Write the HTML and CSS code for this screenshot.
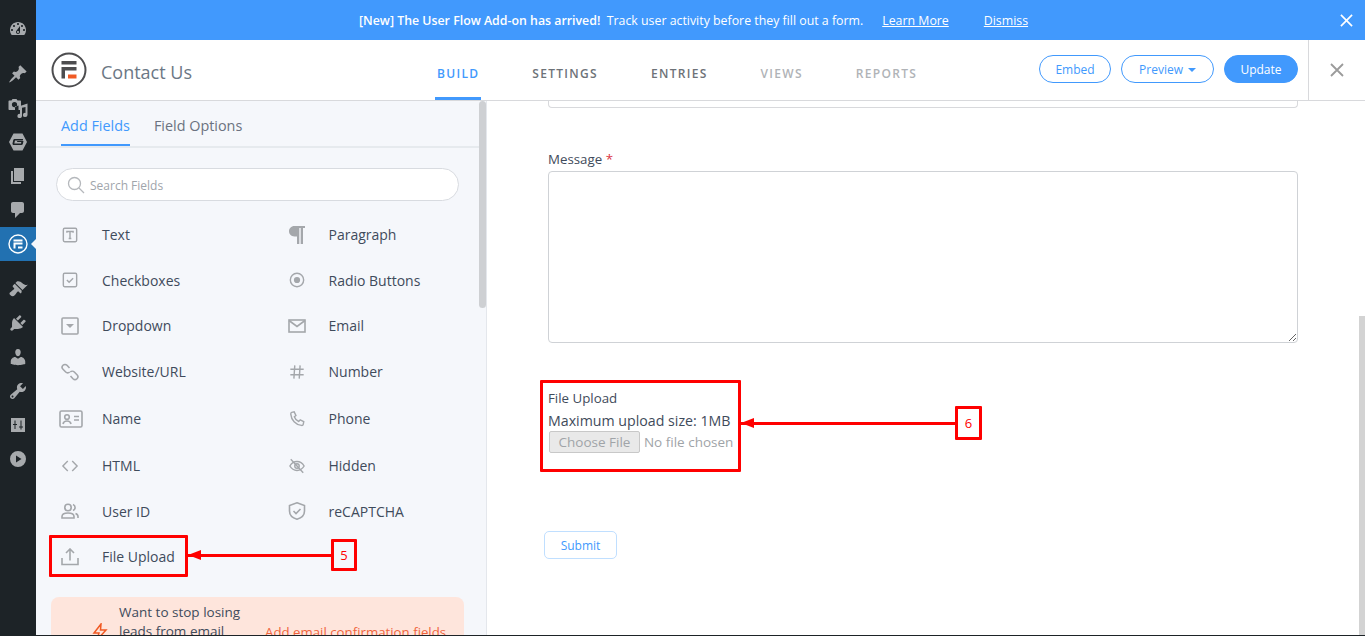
FILE: index.html
```html
<!DOCTYPE html>
<html lang="en">
<head>
    <meta charset="UTF-8">
    <meta name="viewport" content="width=device-width, initial-scale=1.0">
    <title>Contact Us</title>
    <link rel="stylesheet" href="styles.css">
</head>
<body>
    <div class="app">
        <nav class="adminbar">
            <a class="admin-item first"><svg viewBox="0 0 20 20"><path d="M3.760 16h12.480c1.100-1.370 1.760-3.110 1.760-5 0-4.420-3.580-8-8-8s-8 3.580-8 8c0 1.890.66 3.630 1.760 5zM10 4c.55 0 1 .45 1 1s-.45 1-1 1-1-.45-1-1 .45-1 1-1zM6 6c.55 0 1 .45 1 1s-.45 1-1 1-1-.45-1-1 .45-1 1-1zm8 0c.55 0 1 .45 1 1s-.45 1-1 1-1-.45-1-1 .45-1 1-1zm-5.370 5.550L12 7v6c0 1.100-.9 2-2 2s-2-.9-2-2c0-.57.24-1.080.63-1.450zM4 10c.55 0 1 .45 1 1s-.45 1-1 1-1-.45-1-1 .45-1 1-1zm12 0c.55 0 1 .45 1 1s-.45 1-1 1-1-.45-1-1 .45-1 1-1zm-5 3c0-.55-.45-1-1-1s-1 .45-1 1 .45 1 1 1 1-.45 1-1z"/></svg></a>
            <a class="admin-item group"><svg viewBox="0 0 20 20"><path d="M10.440 3.020l1.820-1.820 6.360 6.350-1.830 1.820c-1.050-.68-2.480-.57-3.410.36l-.75.75c-.92.93-1.040 2.350-.35 3.410l-1.830 1.820-2.410-2.410-2.800 2.790c-.42.42-3.380 2.710-3.800 2.290s1.860-3.390 2.280-3.810l2.790-2.790L4.100 9.360l1.830-1.820c1.050.69 2.480.57 3.400-.36l.75-.75c.93-.92 1.050-2.350.36-3.410z"/></svg></a>
            <a class="admin-item"><svg viewBox="0 0 20 20"><path fill-rule="evenodd" d="M4.500 1h4l1 1.500h2.500c.6 0 1 .4 1 1V12h-2.500V7.500L7 8.500v3.500H1.500c-.6 0-1-.4-1-1V3.500c0-.6.4-1 1-1h2zM6.500 4a2.600 2.600 0 1 0 0 5.200 2.600 2.600 0 0 0 0-5.200z"/><path d="M19.500 5.500V17a2.300 2.100 0 1 1-2-2.100V9L14 9.800V18a2.300 2.100 0 1 1-2-2.100V8z"/></svg></a>
            <a class="admin-item"><svg viewBox="0 0 20 20"><path fill-rule="evenodd" d="M5.500 1.500h9L19 10l-4.500 8.500h-9L1 10zM7 7c-1 0-1.600.5-1.800 1.200l-.7 3.300c-.2.900.4 1.500 1.300 1.500h7.500c.8 0 1.300-.4 1.500-1.100l.7-2.900H9.300l-.3 1.100h4.300l-.3 1.500H6.300l.7-3h7.800l.3-1.600z"/></svg></a>
            <a class="admin-item"><svg viewBox="0 0 20 20"><path d="M6 15V2h10v13H6zm-1 1h8v2H3V5h2v11z"/></svg></a>
            <a class="admin-item"><svg viewBox="0 0 20 20"><path d="M5 2h9c1.100 0 2 .9 2 2v7c0 1.100-.9 2-2 2h-2l-5 5v-5H5c-1.100 0-2-.9-2-2V4c0-1.100.9-2 2-2z"/></svg></a>
            <a class="admin-item current">
                <svg class="forms-mark" viewBox="0 0 20 20"><circle cx="10" cy="10" r="9" fill="none" stroke="#fff" stroke-width="1.400"/><path fill="#fff" d="M5.500 5.500h9v2h-9zM5.500 8.600h9v2h-7v4h-2zM10 12.500h4.500v2H10z"/></svg>
            </a>
            <a class="admin-item group"><svg viewBox="0 0 20 20"><path d="M14.480 11.060L7.410 3.990l1.500-1.500c.5-.56 2.300-.47 3.510.32 1.210.8 1.430 1.280 2.910 2.100 1.180.64 2.450 1.260 4.450.85zm-.71.71L6.700 4.700 4.930 6.470c-.39.39-.39 1.020 0 1.410l1.060 1.060c.39.39.39 1.030 0 1.420-.6.6-1.430 1.110-2.210 1.690-.35.26-.7.53-1.010.84C1.430 13.230.76 14.520 2.530 16.300c1.760 1.770 3.060 1.100 4.400-.23.3-.31.57-.66.84-1.020.58-.78 1.090-1.610 1.690-2.210.39-.39 1.020-.39 1.410 0l1.060 1.060c.39.39 1.020.39 1.410 0z"/></svg></a>
            <a class="admin-item"><svg viewBox="0 0 20 20"><path d="M13.110 4.360L9.870 7.600 8 5.730l3.240-3.240c.35-.34 1.050-.2 1.560.32.520.51.660 1.210.31 1.550zm-8 1.770l.91-1.120 9.010 9.010-1.190.84c-.71.71-2.630 1.160-3.820 1.160H6.140L4.900 17.260c-.59.59-1.540.59-2.120 0-.59-.58-.59-1.530 0-2.120l1.240-1.240v-3.880c0-1.130.4-3.190 1.090-3.890zm7.260 3.970l3.240-3.240c.34-.35 1.040-.21 1.550.31.520.51.660 1.210.31 1.550l-3.240 3.250z"/></svg></a>
            <a class="admin-item"><svg viewBox="0 0 20 20"><path d="M10 9.250c-2.270 0-2.730-3.440-2.730-3.440C7 4.020 7.820 2 9.970 2c2.160 0 2.980 2.020 2.710 3.810 0 0-.41 3.440-2.680 3.440zm0 2.570L12.720 10c2.390 0 4.520 2.330 4.520 4.530v2.490s-3.650 1.130-7.240 1.130c-3.650 0-7.240-1.130-7.240-1.130v-2.490c0-2.250 1.940-4.480 4.470-4.480z"/></svg></a>
            <a class="admin-item"><svg viewBox="0 0 20 20"><path d="M16.680 9.770c-1.340 1.340-3.300 1.670-4.950.99l-5.410 6.520c-.99.99-2.590.99-3.580 0s-.99-2.590 0-3.570l6.520-5.420c-.68-1.650-.35-3.610.99-4.950 1.280-1.280 3.120-1.620 4.720-1.060l-2.890 2.890 2.820 2.820 2.860-2.870c.53 1.580.18 3.390-1.080 4.650zM3.810 16.210c.4.39 1.040.39 1.430 0 .4-.4.4-1.040 0-1.430-.39-.4-1.030-.4-1.430 0-.39.39-.39 1.030 0 1.430z"/></svg></a>
            <a class="admin-item"><svg viewBox="0 0 20 20"><path fill-rule="evenodd" d="M3 3h14v14H3zm3.500 2.500v3.500H5v1h1.500v4h1v-4H9V9H7.500V5.500zm6 0v6H11v1h1.500v2h1v-2H15v-1h-1.500v-6z"/></svg></a>
            <a class="admin-item"><svg viewBox="0 0 20 20"><path fill-rule="evenodd" d="M10 2a8 8 0 1 1 0 16 8 8 0 0 1 0-16zM8 6.500v7l5.500-3.500z"/></svg></a>
        </nav>

        <div class="workspace">
            <div class="notice">
                <span class="notice-text"><strong>[New] The User Flow Add-on has arrived!</strong>&nbsp; Track user activity before they fill out a form.</span>
                <a class="notice-link">Learn More</a>
                <a class="notice-link">Dismiss</a>
                <svg class="notice-close" viewBox="0 0 14 14"><path d="M1 1l12 12M13 1L1 13"/></svg>
            </div>

            <header class="builder-head">
                <svg class="logo" viewBox="0 0 36 36"><circle cx="18" cy="18" r="16.500" fill="none" stroke="#4d4d4f" stroke-width="2"/><path fill="#4d4d4f" d="M10.500 9h15v3.500h-15zM10.500 15h15v3.500h-11.500v8h-3.500z"/><path fill="#f05a24" d="M17 22.500h8.500v4H17z"/></svg>
                <div class="form-title">Contact Us</div>
                <div class="head-tabs">
                    <a class="head-tab active">BUILD</a>
                    <a class="head-tab">SETTINGS</a>
                    <a class="head-tab">ENTRIES</a>
                    <a class="head-tab muted">VIEWS</a>
                    <a class="head-tab muted">REPORTS</a>
                </div>
                <div class="head-actions">
                    <a class="pill embed">Embed</a>
                    <a class="pill preview">Preview <i class="caret"></i></a>
                    <a class="pill update">Update</a>
                </div>
                <div class="head-close">
                    <svg viewBox="0 0 14 14"><path d="M1 1l12 12M13 1L1 13"/></svg>
                </div>
            </header>

            <div class="builder-body">
                <aside class="field-panel">
                    <div class="panel-tabs">
                        <a class="panel-tab active">Add Fields</a>
                        <a class="panel-tab">Field Options</a>
                    </div>
                    <div class="search-box">
                        <svg viewBox="0 0 18 18"><circle cx="7.500" cy="7.500" r="6"/><path d="M12 12l5 5"/></svg>
                        <span>Search Fields</span>
                    </div>
                    <div class="field-grid">
                        <div class="field-item"><svg viewBox="0 0 18 18"><rect x="1.500" y="1.500" width="15" height="15" rx="1.500"/><path d="M5.500 6.500V5h7v1.500M9 5v8M7.500 13h3"/></svg><span>Text</span></div>
                        <div class="field-item"><svg class="wide tall" viewBox="0 0 18 18"><path class="solid" d="M6.500 0H17v2h-2v16h-2.300V2h-1.400v16H9V10.500H6.500C3 10.500 1 8 1 5.300S3 0 6.500 0z"/></svg><span>Paragraph</span></div>
                        <div class="field-item"><svg viewBox="0 0 18 18"><rect x="1.500" y="1.500" width="15" height="15" rx="1.500"/><path d="M5.500 9l2.500 2.500 4.500-4.500"/></svg><span>Checkboxes</span></div>
                        <div class="field-item"><svg viewBox="0 0 18 18"><circle cx="9" cy="9" r="7.500"/><circle class="solid" cx="9" cy="9" r="3.500"/></svg><span>Radio Buttons</span></div>
                        <div class="field-item"><svg class="wide tall" viewBox="0 0 18 18"><rect x="1" y="1" width="16" height="16" rx="1"/><path class="solid" d="M5 7h8l-4 4z"/></svg><span>Dropdown</span></div>
                        <div class="field-item"><svg class="wide" viewBox="0 0 18 14"><rect x="1" y="1" width="16" height="12"/><path d="M1 1.500l8 6 8-6"/></svg><span>Email</span></div>
                        <div class="field-item"><svg class="wide tall" viewBox="0 0 18 18"><path d="M8.500 5L6 2.300a2.800 2.800 0 0 0-4 4L4.700 9c1.100 1.100 2.900 1.100 4 0M9.500 13l2.500 2.700a2.800 2.800 0 0 0 4-4L13.300 9c-1.100-1.100-2.900-1.100-4 0"/></svg><span>Website/URL</span></div>
                        <div class="field-item"><svg viewBox="0 0 18 18"><path d="M6.500 1.500l-1 15M12.500 1.500l-1 15M1.500 6h15M1.500 12h15"/></svg><span>Number</span></div>
                        <div class="field-item"><svg class="wider" viewBox="0 0 24 18"><rect x="1" y="1" width="22" height="16" rx="1.500"/><circle cx="8" cy="7" r="2.300"/><path d="M4 14c.5-2.500 2-3 4-3s3.500.5 4 3M15 6.500h5M15 10h5"/></svg><span>Name</span></div>
                        <div class="field-item"><svg viewBox="0 0 18 18"><path d="M3 1.500L5.800 1l2 4-1.800 1.500c.8 2.500 2.500 4.300 5 5.300l1.600-1.800 4 2-.6 3c-.2 1-1 1.300-2 1.200C7.500 15.500 2.500 10 2 3.500c0-1 .3-1.800 1-2z"/></svg><span>Phone</span></div>
                        <div class="field-item"><svg class="wide" viewBox="0 0 18 18"><path d="M6.500 3.500L1 9l5.500 5.500M11.500 3.500L17 9l-5.500 5.500"/></svg><span>HTML</span></div>
                        <div class="field-item"><svg class="wide" viewBox="0 0 18 18"><path d="M1 9c2-3.500 5-5 8-5s6 1.500 8 5c-2 3.500-5 5-8 5s-6-1.500-8-5z"/><circle cx="9" cy="9" r="2.500"/><path d="M2 1.500l14 15"/></svg><span>Hidden</span></div>
                        <div class="field-item"><svg class="wide" viewBox="0 0 18 16"><circle cx="7" cy="4.500" r="3.200"/><path d="M1 15v-1.500C1 11 3 10 7 10s6 1 6 3.500V15zM12 1.500a3.200 3.200 0 0 1 0 6M14.500 10.500c1.500.5 2.500 1.500 2.500 3V15"/></svg><span>User ID</span></div>
                        <div class="field-item"><svg class="wide tall" viewBox="0 0 18 18"><path d="M9 .8l7.500 2.700V9c0 4-3 6.900-7.500 8.200C4.500 15.900 1.500 13 1.500 9V3.500z"/><path d="M5.500 9l2.500 2.500 4.500-4.500"/></svg><span>reCAPTCHA</span></div>
                        <div class="field-item"><svg class="wide tall" viewBox="0 0 18 18"><path d="M1 10v6.500h16V10M9 12.500V1.500M5 5l4-4 4 4"/></svg><span>File Upload</span></div>
                    </div>
                    <div class="upsell">
                        <svg viewBox="0 0 18 18"><path d="M10 1L3 10h5l-2 7 9-10h-5.500z"/></svg>
                        <div class="upsell-text">Want to stop losing leads from email</div>
                        <a class="upsell-link">Add email confirmation fields</a>
                    </div>
                    <div class="scroll-thumb panel-thumb"></div>
                </aside>

                <main class="form-preview">
                    <div class="stub-input"></div>
                    <label class="form-label message-label">Message <em>*</em></label>
                    <textarea class="message-input"></textarea>
                    <div class="upload-block">
                        <label class="form-label">File Upload</label>
                        <div class="upload-size">Maximum upload size: 1MB</div>
                        <input class="upload-input" type="file" disabled>
                    </div>
                    <button class="submit-btn" type="button">Submit</button>
                    <div class="scroll-thumb page-thumb"></div>
                </main>
            </div>
        </div>

        <!-- annotations drawn over the screenshot -->
        <div class="mark-box box-five"></div>
        <div class="mark-line line-five"></div>
        <div class="mark-num num-five">5</div>
        <div class="mark-box box-six"></div>
        <div class="mark-line line-six"></div>
        <div class="mark-num num-six">6</div>
    </div>
</body>
</html>
```

FILE: styles.css
```css
html, body {
    margin: 0;
    padding: 0;
    height: 636px;
    overflow: hidden;
    background: #1d2327;
}

body {
    font-family: "Open Sans", "Noto Sans", Arial, sans-serif;
    font-size: 14px;
    color: #3f4b5b;
}

.app {
    position: relative;
    display: flex;
    height: 635px;
    overflow: hidden;
}

/* wordpress admin strip */
.adminbar {
    width: 36px;
    flex: none;
    background: #1d2327;
    padding-top: 12px;
    box-sizing: border-box;
}

.admin-item {
    display: flex;
    height: 34px;
    align-items: center;
    justify-content: center;
    position: relative;
}

.admin-item svg {
    width: 20px;
    height: 20px;
    fill: #a7aaad;
}

.admin-item.group {
    margin-top: 11px;
}

.admin-item.current {
    background: #2271b1;
}

.admin-item.current::after {
    content: "";
    position: absolute;
    right: 0;
    top: 12px;
    border: 5px solid transparent;
    border-right-color: #f5f7fb;
    border-left: 0;
}

.workspace {
    flex: 1;
    min-width: 0;
    display: flex;
    flex-direction: column;
}

/* top notice */
.notice {
    height: 40px;
    flex: none;
    background: #4199fd;
    color: #fff;
    display: flex;
    align-items: center;
    font-size: 12.350px;
    padding-left: 323px;
    position: relative;
}

.notice-text strong {
    font-weight: 600;
}

.notice-link {
    color: #fff;
    text-decoration: underline;
    margin-left: 19px;
}

.notice-link + .notice-link {
    margin-left: 35px;
}

.notice-close {
    position: absolute;
    right: 12px;
    top: 14px;
    width: 13px;
    height: 13px;
    fill: none;
    stroke: #fff;
    stroke-width: 1.800;
}

/* builder header */
.builder-head {
    height: 61px;
    flex: none;
    box-sizing: border-box;
    background: #fff;
    border-bottom: 1px solid #d8d9dc;
    display: flex;
    align-items: center;
    padding-left: 15px;
}

.logo {
    width: 36px;
    height: 36px;
    flex: none;
}

.form-title {
    font-size: 18px;
    color: #6b7785;
    margin: 4px 0 0 14px;
    width: 336px;
}

.head-tabs {
    display: flex;
    align-self: stretch;
    gap: 53px;
    width: 602px;
}

.head-tab {
    display: flex;
    align-items: center;
    font-size: 12px;
    font-weight: 600;
    letter-spacing: 1.300px;
    color: #6d7278;
    padding: 0 2px;
    margin: 0 -2px;
    box-sizing: border-box;
    height: 60px;
    padding-top: 7px;
}

.head-tab.active {
    color: #4199fd;
    border-bottom: 3px solid #4199fd;
    padding-top: 10px;
}

.head-tab.muted {
    color: #b0b3b7;
}

.head-actions {
    display: flex;
    gap: 10px;
    margin-bottom: 2px;
}

.pill {
    height: 28px;
    box-sizing: border-box;
    border: 1px solid #4199fd;
    border-radius: 14px;
    color: #4199fd;
    font-size: 12px;
    display: flex;
    align-items: center;
    justify-content: center;
}

.pill.embed {
    width: 72px;
}

.pill.preview {
    width: 93px;
    gap: 5px;
}

.pill.update {
    width: 74px;
    background: #4199fd;
    color: #fff;
}

.caret {
    border: 4px solid transparent;
    border-top: 4px solid #4199fd;
    border-bottom: 0;
    margin-top: 2px;
}

.head-close {
    margin-left: 10px;
    align-self: stretch;
    flex: 1;
    border-left: 1px solid #d8d9dc;
    display: flex;
    align-items: center;
    justify-content: center;
}

.head-close svg {
    width: 14px;
    height: 14px;
    fill: none;
    stroke: #9b9b9b;
    stroke-width: 1.800;
}

.builder-body {
    flex: 1;
    min-height: 0;
    display: flex;
}

/* left panel */
.field-panel {
    width: 451px;
    flex: none;
    box-sizing: border-box;
    background: #f5f7fb;
    border-right: 1px solid #e4e7ec;
    position: relative;
    overflow: hidden;
}

.panel-tabs {
    display: flex;
    gap: 24px;
    height: 45px;
    padding-left: 25px;
    border-bottom: 2px solid #e6eaee;
    font-size: 14.400px;
}

.panel-tab {
    height: 45px;
    box-sizing: border-box;
    line-height: 50px;
    color: #6b7280;
}

.panel-tab.active {
    color: #4199fd;
    border-bottom: 2px solid #4199fd;
}

.search-box {
    margin: 20px 27px 0 20px;
    height: 33px;
    box-sizing: border-box;
    border: 1px solid #d8dbe0;
    border-radius: 17px;
    background: #fff;
    display: flex;
    align-items: center;
    padding-left: 10px;
    gap: 5px;
    font-size: 12px;
    color: #a0a5ab;
}

.search-box span {
    padding-top: 2px;
}

.search-box svg {
    width: 18px;
    height: 18px;
    fill: none;
    stroke: #b5b8bc;
    stroke-width: 1.300;
}

.field-grid {
    display: grid;
    grid-template-columns: 226.500px 200px;
    grid-template-rows: repeat(4, 45.600px) 48.600px repeat(3, 45.600px);
    margin: 11px 0 0 14px;
}

.field-item {
    display: flex;
    align-items: center;
    padding-left: 9px;
}

.field-item svg {
    width: 16px;
    height: 16px;
    flex: none;
    margin: 0 24px 0 3px;
    fill: none;
    stroke: #a4a7ab;
    stroke-width: 1.600;
}

.field-item svg.wide {
    width: 18px;
    margin: 0 23px 0 2px;
}

.field-item svg.tall {
    height: 18px;
}

.field-item svg.wider {
    width: 24px;
    height: 18px;
    margin: 0 19px 0 0;
}

.field-item svg .solid {
    fill: #a4a7ab;
    stroke: none;
}

.upsell {
    position: relative;
    margin: 17px 22px 0 15px;
    height: 70px;
    background: #fee5dc;
    border-radius: 8px;
    box-sizing: border-box;
    padding: 6px 0 0 68px;
    line-height: 19px;
    font-size: 13.500px;
}

.upsell-text {
    width: 130px;
}

.upsell svg {
    position: absolute;
    left: 40px;
    top: 26px;
    width: 18px;
    height: 18px;
    fill: none;
    stroke: #f05a24;
    stroke-width: 1.500;
}

.upsell-link {
    position: absolute;
    left: 214px;
    top: 26px;
    color: #f0643c;
    font-size: 13.250px;
    white-space: nowrap;
}

/* right side, form preview */
.form-preview {
    flex: 1;
    min-width: 0;
    position: relative;
    background: #fff;
    padding: 0 0 0 61px;
    overflow: hidden;
}

.stub-input {
    width: 750px;
    height: 7px;
    box-sizing: border-box;
    border: 1px solid #d8d9dc;
    border-top: 0;
    border-radius: 0 0 4px 4px;
}

.form-label {
    display: block;
    font-size: 13.300px;
    color: #3f4b5b;
}

.form-label em {
    color: #dc3545;
    font-style: normal;
}

.message-label {
    margin-top: 42px;
    line-height: 18px;
}

.message-input {
    display: block;
    margin-top: 3px;
    width: 750px;
    height: 172px;
    box-sizing: border-box;
    border: 1px solid #cfd2d6;
    border-radius: 4px;
    outline: none;
}

.upload-block {
    margin-top: 46px;
}

.upload-block .form-label {
    line-height: 18px;
}

.upload-size {
    margin-top: 4px;
    line-height: 20px;
    font-size: 14.200px;
}

.upload-input {
    display: block;
    margin: 0 0 1px 1px;
    width: 190px;
    font-family: inherit;
    font-size: 13.500px;
    color: #a0a4a8;
}

.upload-input::file-selector-button {
    font-family: inherit;
    font-size: 13.500px;
    height: 22px;
    padding: 0 8.500px;
    margin-right: 4px;
    border: 1px solid #c8c8c8;
    border-radius: 2px;
    background: #e9e9e9;
    color: #a0a4a8;
}

.submit-btn {
    display: block;
    margin: 78px 0 0 -4px;
    width: 73px;
    height: 28px;
    box-sizing: border-box;
    border: 1px solid #c0dfff;
    border-radius: 5px;
    background: #fff;
    color: #4199fd;
    font-family: inherit;
    font-size: 12px;
}

.scroll-thumb {
    position: absolute;
    right: 0;
}

.panel-thumb {
    top: 0;
    width: 7px;
    height: 207px;
    border-radius: 4px;
    background: #ced0d3;
}

.page-thumb {
    top: 215px;
    width: 6px;
    height: 320px;
    background: #d3d3d3;
}

/* red annotations */
.mark-box,
.mark-num {
    position: absolute;
    box-sizing: border-box;
    border: 3px solid #f00;
    border-radius: 1px;
}

.box-five {
    left: 49px;
    top: 535px;
    width: 139px;
    height: 42px;
}

.box-six {
    left: 540px;
    top: 380px;
    width: 201px;
    height: 92px;
}

.mark-num {
    background: #fff;
    color: #f00;
    font-size: 13px;
    display: flex;
    align-items: center;
    justify-content: center;
}

.num-five {
    left: 331px;
    top: 539px;
    width: 26px;
    height: 32px;
    background: #f5f7fb;
}

.num-six {
    left: 955px;
    top: 406px;
    width: 27px;
    height: 34px;
}

.mark-line {
    position: absolute;
    height: 3px;
    background: #f00;
}

.mark-line::before {
    content: "";
    position: absolute;
    left: 0;
    top: -4px;
    border: 5.500px solid transparent;
    border-right: 13px solid #f00;
    border-left: 0;
}

.line-five {
    left: 188px;
    top: 554px;
    width: 143px;
}

.line-six {
    left: 741px;
    top: 422px;
    width: 214px;
}
```
